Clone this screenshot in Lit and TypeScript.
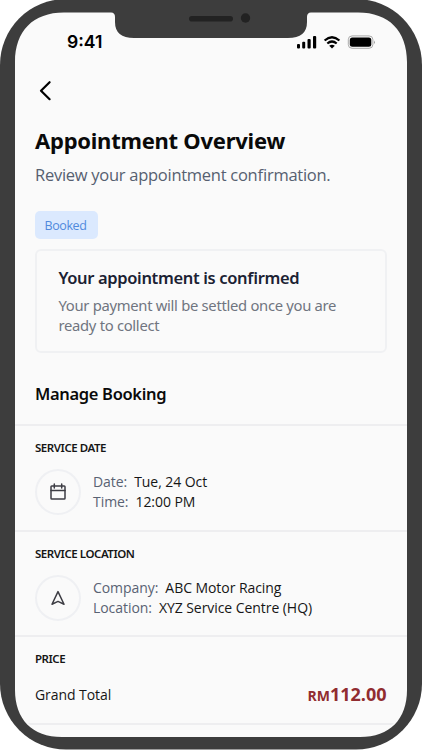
import { LitElement, html, css, svg } from "lit";
import { customElement } from "lit/decorators.js";

const calendar = svg`<rect x="2" y="3" width="14" height="13" rx=".8"/><path d="M2 7.4h14M5.3 1v4M12.7 1v4"/>`;
const arrow = svg`<path d="M9 2.6 15 15.2 9 12.4 3 15.2Z"/>`;

@customElement("app-root")
export class AppRoot extends LitElement {
  static styles = css`
    :host { display: block; }
    * { box-sizing: border-box; }
    .device { position: relative; width: 422px; height: 750px; overflow: hidden; background: #fff; color: #161616; font-family: "Open Sans", sans-serif; font-feature-settings: "liga" 1; }
    .frame { position: absolute; inset: 0; display: block; }
    .screen { position: relative; margin-left: 15px; width: 392px; height: 737px; overflow: hidden; border-radius: 0 0 46px 46px; display: flex; flex-direction: column; }
    .screen > * { flex: none; }
    .status { height: 68px; padding: 32px 32px 0 52px; display: flex; justify-content: space-between; align-items: flex-start; }
    .clock { font: 600 17.6px/20px Inter, sans-serif; color: #000; }
    .signals { display: block; }
    .back { display: block; margin: 12px 0 0 23px; }
    .title, .lead, .heading, .confirm, .body, .label, .total, .price { white-space: nowrap; margin: 0; }
    .title, .heading, .confirm, .body, .label { font-family: "Noto Sans", sans-serif; }
    .title { margin: 23px 0 0 20px; font-size: 22px; line-height: 30px; font-weight: 700; letter-spacing: -.25px; color: #0a0a0a; }
    .lead { margin: 9px 0 0 20px; font-size: 16.5px; line-height: 22px; letter-spacing: -.27px; color: #566070; }
    .badge { margin: 25px 0 0 20px; width: 63px; height: 28px; padding-left: 9.5px; border-radius: 5px; background: #dbe9fe; color: #5089dd; font-size: 12.5px; line-height: 29.5px; letter-spacing: -.4px; }
    .card { margin: 10px 20px 0; height: 104px; border: 2px solid #f0f1f3; border-radius: 6px; padding: 15px 21.5px; }
    .confirm { font-size: 16.5px; line-height: 24px; font-weight: 600; letter-spacing: -.35px; color: #1b2233; }
    .body { margin-top: 5px; font-size: 14.8px; line-height: 20px; letter-spacing: -.3px; color: #707580; }
    .heading { margin: 29px 0 18px 20px; font-size: 16.5px; line-height: 24px; font-weight: 600; letter-spacing: -.33px; color: #0a0a0a; }
    .section { border-top: 2px solid #eeeef0; height: 105.7px; padding: 14px 20px 0; }
    .price-section { height: 88px; }
    .label { font-size: 11.5px; line-height: 16px; font-weight: 600; letter-spacing: -.45px; }
    .row { display: flex; align-items: center; gap: 12px; margin-top: 13px; }
    .ring { width: 46px; height: 46px; flex: none; border: 2px solid #eff0f3; border-radius: 50%; display: grid; place-items: center; }
    .lines { font-size: 14px; line-height: 20px; letter-spacing: -.06px; }
    .key { color: #596273; margin-right: 7px; }
    .totals { display: flex; justify-content: space-between; align-items: center; margin-top: 14.5px; }
    .total { font-size: 14px; line-height: 24px; letter-spacing: -.06px; }
    .price { font-size: 18px; line-height: 24px; font-weight: 700; color: #912c30; margin-right: .5px; }
    .currency { font-size: 14px; }
    .last { border-top: 2px solid #eeeef0; height: 20px; }
  `;

  private item(label: string, icon: unknown, rows: [string, string][]) {
    return html`<section class="section">
      <h3 class="label">${label}</h3>
      <div class="row">
        <div class="ring"><svg width="18" height="18" viewBox="0 0 18 18" fill="none" stroke="#3d3d44" stroke-width="1.5" stroke-linejoin="round" stroke-linecap="round">${icon}</svg></div>
        <div class="lines">${rows.map(([k, v]) => html`<div><span class="key">${k}:</span><span>${v}</span></div>`)}</div>
      </div>
    </section>`;
  }

  render() {
    return html`<div class="device">
      <svg class="frame" width="422" height="750" viewBox="0 0 422 750">
        <rect x="0" y="-1" width="422" height="750.5" rx="66" fill="#3d3d3d"/>
        <path fill="#fafafa" d="M64 12.5H111Q115 12.5 115 17V22Q115 38 134 38H288Q307 38 307 22V17Q307 12.5 311 12.5H358C389 12.5 407 31 407 62V690C407 719 390 737 360 737H62C32 737 15 719 15 690V62C15 31 33 12.5 64 12.5Z"/>
        <rect x="189" y="16" width="44" height="5.6" rx="2.8" fill="#222"/>
        <circle cx="245.5" cy="18" r="4.7" fill="#222"/>
      </svg>
      <div class="screen">
        <div class="status">
          <span class="clock">9:41</span>
          <svg class="signals" width="80" height="18" viewBox="295 32 80 18">
            <g fill="#000"><rect x="297" y="44" width="3" height="4.5" rx="1"/><rect x="302.2" y="41.8" width="3" height="6.7" rx="1"/><rect x="307.5" y="39" width="3.2" height="9.5" rx="1"/><rect x="313" y="36" width="3.2" height="12.5" rx="1"/>
            <path d="M329.2 45.8Q332 43.7 334.8 45.8L332 48.5Z"/></g>
            <path d="M324.6 40.5Q332 34 339.4 40.5M327.3 43.5Q332 39.5 336.7 43.5" fill="none" stroke="#000" stroke-width="2.2"/>
            <rect x="348.3" y="35.9" width="24.6" height="12.4" rx="3.8" fill="none" stroke="#aaa"/>
            <rect x="349.8" y="37.4" width="21.5" height="9.4" rx="2.5"/>
            <path d="M374 40.4q1.7 1.8 0 3.6z" fill="#999"/>
          </svg>
        </div>
        <svg class="back" width="18" height="22" viewBox="0 0 18 22" fill="none" stroke="#000" stroke-width="2.2" stroke-linecap="round" stroke-linejoin="round"><path d="M11.6 2.2 3 10.7l8.6 8.5"/></svg>
        <h1 class="title">Appointment Overview</h1>
        <p class="lead">Review your appointment confirmation.</p>
        <div class="badge">Booked</div>
        <div class="card">
          <h2 class="confirm">Your appointment is confirmed</h2>
          <p class="body">Your payment will be settled once you are<br>ready to collect</p>
        </div>
        <h2 class="heading">Manage Booking</h2>
        ${this.item("SERVICE DATE", calendar, [["Date", "Tue, 24 Oct"], ["Time", "12:00 PM"]])}
        ${this.item("SERVICE LOCATION", arrow, [["Company", "ABC Motor Racing"], ["Location", "XYZ Service Centre (HQ)"]])}
        <section class="section price-section">
          <h3 class="label">PRICE</h3>
          <div class="totals"><span class="total">Grand Total</span><span class="price"><span class="currency">RM</span>112.00</span></div>
        </section>
        <div class="last"></div>
      </div>
    </div>`;
  }
}
